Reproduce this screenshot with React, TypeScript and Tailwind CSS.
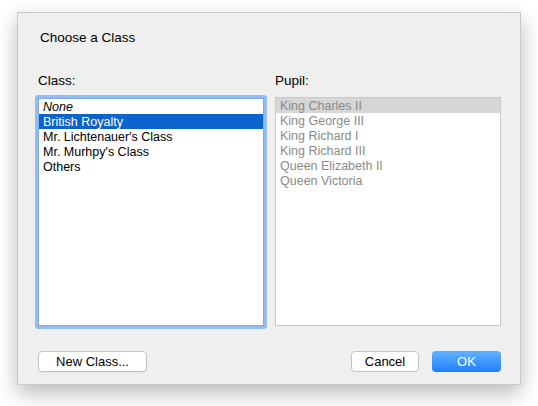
import React from 'react';

const classes = ['None', 'British Royalty', "Mr. Lichtenauer's Class", "Mr. Murhpy's Class", 'Others'];
const pupils = ['King Charles II', 'King George III', 'King Richard I', 'King Richard III', 'Queen Elizabeth II', 'Queen Victoria'];

export default function App() {
  return (
    <div className="w-[538px] h-[406px] bg-white pt-[12px] pl-[17px] font-['Liberation_Sans',Arial,sans-serif] text-[13px] text-black">
      <div className="w-[504px] h-[373px] bg-[#efefef] border border-[#c9c9c9] shadow-[0_8px_20px_rgba(0,0,0,0.28)] flex flex-col">
        {/* Title */}
        <div className="pl-[22px] pt-[17px] leading-[16px] text-[13.5px]">Choose a Class</div>

        {/* Lists */}
        <div className="flex gap-[8px] pl-[17px] pr-[19px] mt-[27px]">
          <div className="flex flex-col w-[232px]">
            <div className="pl-[3px] leading-[16px] mb-[6px] text-[13.5px]">Class:</div>
            <div className="h-[234px] border-[3px] border-[#93bdf1] rounded-[3px] bg-white">
              <div className="h-full border border-[#7faaea] bg-white">
                {classes.map((c, i) => (
                  <div
                    key={c}
                    className={[
                      'h-[15px] leading-[16px] pl-[4px] text-[12.5px]',
                      i === 1 ? 'bg-[#0b63cf] text-white' : 'text-black',
                      i === 0 ? 'italic' : '',
                    ].join(' ')}
                  >
                    {c}
                  </div>
                ))}
              </div>
            </div>
          </div>

          <div className="flex flex-col w-[226px]">
            <div className="leading-[16px] mb-[6px] text-[13.5px]">Pupil:</div>
            <div className="h-[229px] mt-[2px] border border-[#c8c8c8] bg-white">
              {pupils.map((p, i) => (
                <div
                  key={p}
                  className={[
                    'h-[15px] leading-[16px] pl-[4px] text-[12.5px] text-[#8a8a8a]',
                    i === 0 ? 'bg-[#d6d6d6]' : '',
                  ].join(' ')}
                >
                  {p}
                </div>
              ))}
            </div>
          </div>
        </div>

        {/* Buttons */}
        <div className="flex items-center pl-[20px] pr-[19px] mt-[22px]">
          <button className="w-[109px] h-[21px] bg-white border border-[#c4c4c4] rounded-[4px] text-[13px] leading-[19px] shadow-[0_1px_0_rgba(0,0,0,0.04)]">
            New Class...
          </button>
          <div className="flex-1" />
          <button className="w-[68px] h-[21px] bg-white border border-[#c4c4c4] rounded-[4px] text-[13px] leading-[19px]">
            Cancel
          </button>
          <button className="ml-[13px] w-[69px] h-[21px] rounded-[4px] text-white text-[13px] leading-[21px] bg-gradient-to-b from-[#62b1fe] to-[#1a7ffb]">
            OK
          </button>
        </div>
      </div>
    </div>
  );
}
